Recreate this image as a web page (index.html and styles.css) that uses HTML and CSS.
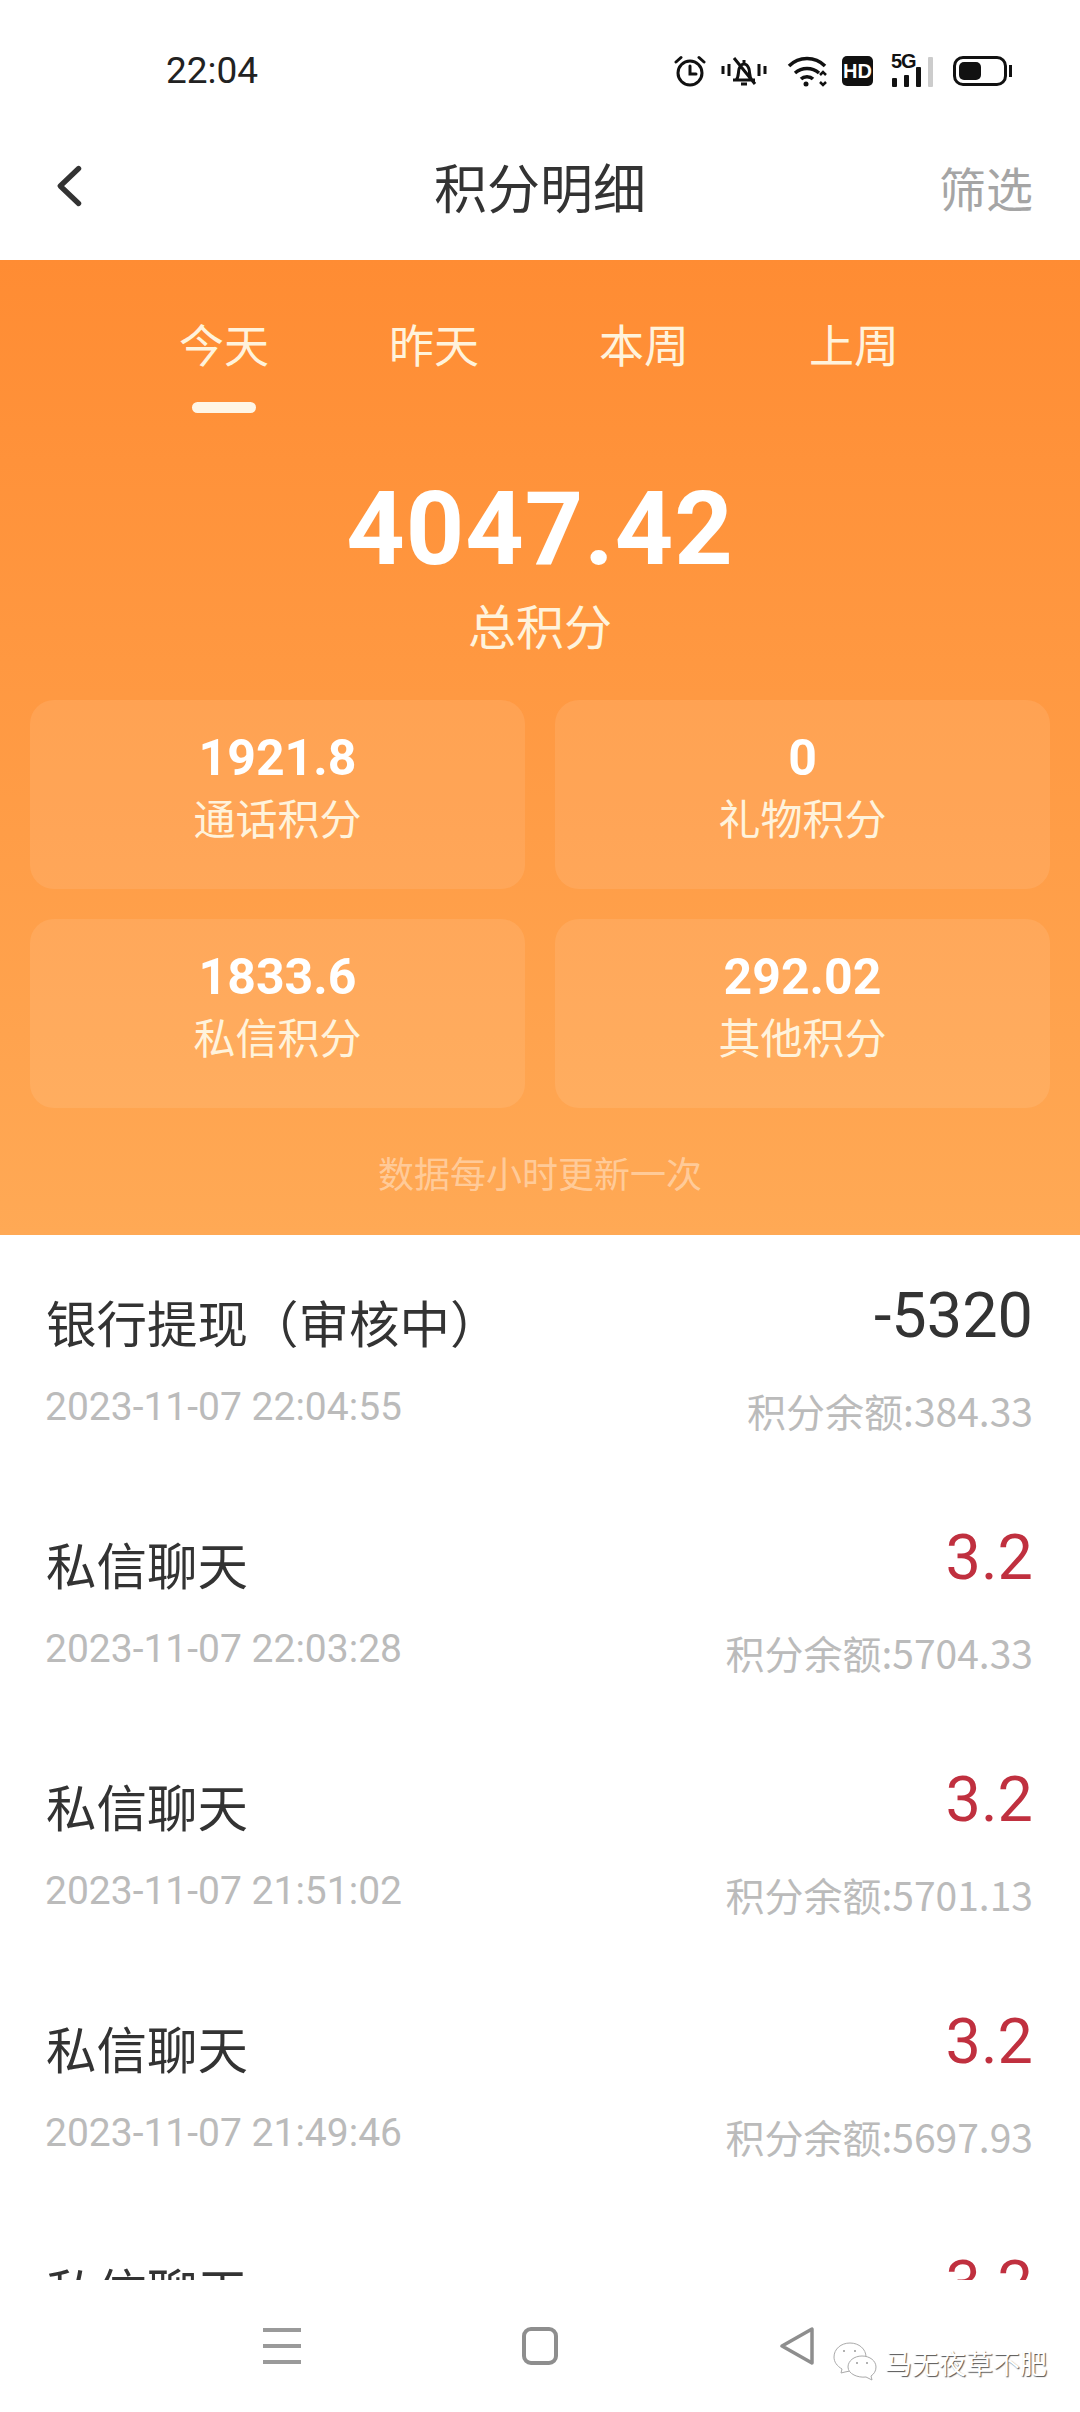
FILE: index.html
```html
<!DOCTYPE HTML>
<html lang="zh-CN">

<head>
    <meta charset="utf-8">
    <meta name="viewport" content="width=device-width, initial-scale=1">
    <title>积分明细</title>
    <link rel="stylesheet" href="styles.css">
</head>

<body>
    <div class="phone">
        <div class="status-bar">
            <span class="clock">22:04</span>
            <div class="status-icons">
                <svg class="ic-alarm" viewBox="0 0 32 32" width="32" height="32" fill="none" stroke="#111" stroke-width="3">
                    <circle cx="16" cy="18" r="12"/>
                    <path d="M16 11v8h6M2 7l5-4.500M30 7l-5-4.500" stroke-linecap="round"/>
                </svg>
                <svg class="ic-bell" viewBox="0 0 46 32" width="46" height="32" fill="none" stroke="#111" stroke-width="3">
                    <path d="M2 11v8M8 9v12M38 9v12M44 11v8"/>
                    <path d="M12 25h22M15 25c3-3 2-7 3-11 1-3 3-5 5-5s4 2 5 5c1 4 0 8 3 11M23 9V5M20 29h6M13 3l21 26"/>
                </svg>
                <svg class="ic-wifi" viewBox="0 0 42 32" width="42" height="32" fill="none" stroke="#111" stroke-width="3.500">
                    <path d="M2 11c10-10 26-10 36 0M8 18c7-6 17-6 24 0M14 24c3-3 9-3 12 0"/>
                    <circle cx="19" cy="29" r="2.500" fill="#111" stroke="none"/>
                    <path d="M33 20l3-3 3 3M33 27l3 3 3-3" stroke-width="2.500"/>
                </svg>
                <span class="ic-hd">HD</span>
                <div class="ic-signal">
                    <span class="five-g">5G</span>
                    <i class="bar bar-1"></i>
                    <i class="bar bar-2"></i>
                    <i class="bar bar-3"></i>
                    <i class="bar bar-4"></i>
                </div>
                <div class="ic-battery">
                    <div class="battery-body"><div class="battery-level"></div></div>
                    <div class="battery-tip"></div>
                </div>
            </div>
        </div>

        <div class="header">
            <svg class="back" viewBox="0 0 32 48" width="28" height="44" fill="none" stroke="#333" stroke-width="6" stroke-linecap="round" stroke-linejoin="round">
                <path d="M27 4L6 24l21 20"/>
            </svg>
            <h1 class="title">积分明细</h1>
            <span class="filter">筛选</span>
        </div>

        <div class="summary">
            <div class="tabs">
                <div class="tab active">今天</div>
                <div class="tab">昨天</div>
                <div class="tab">本周</div>
                <div class="tab">上周</div>
            </div>
            <div class="total">4047.42</div>
            <div class="total-label">总积分</div>
            <div class="cards">
                <div class="card"><b>1921.8</b><span>通话积分</span></div>
                <div class="card"><b>0</b><span>礼物积分</span></div>
                <div class="card"><b>1833.6</b><span>私信积分</span></div>
                <div class="card"><b>292.02</b><span>其他积分</span></div>
            </div>
            <div class="note">数据每小时更新一次</div>
        </div>

        <div class="list">
            <div class="row">
                <div class="row-left">
                    <div class="row-title">银行提现（审核中）</div>
                    <div class="row-date">2023-11-07 22:04:55</div>
                </div>
                <div class="row-right">
                    <div class="amount minus">-5320</div>
                    <div class="balance">积分余额:384.33</div>
                </div>
            </div>
            <div class="row">
                <div class="row-left">
                    <div class="row-title">私信聊天</div>
                    <div class="row-date">2023-11-07 22:03:28</div>
                </div>
                <div class="row-right">
                    <div class="amount">3.2</div>
                    <div class="balance">积分余额:5704.33</div>
                </div>
            </div>
            <div class="row">
                <div class="row-left">
                    <div class="row-title">私信聊天</div>
                    <div class="row-date">2023-11-07 21:51:02</div>
                </div>
                <div class="row-right">
                    <div class="amount">3.2</div>
                    <div class="balance">积分余额:5701.13</div>
                </div>
            </div>
            <div class="row">
                <div class="row-left">
                    <div class="row-title">私信聊天</div>
                    <div class="row-date">2023-11-07 21:49:46</div>
                </div>
                <div class="row-right">
                    <div class="amount">3.2</div>
                    <div class="balance">积分余额:5697.93</div>
                </div>
            </div>
            <div class="row">
                <div class="row-left">
                    <div class="row-title">私信聊天</div>
                    <div class="row-date">2023-11-07 21:40:12</div>
                </div>
                <div class="row-right">
                    <div class="amount">3.2</div>
                    <div class="balance">积分余额:5694.73</div>
                </div>
            </div>
        </div>

        <div class="nav">
            <svg viewBox="0 0 38 38" width="38" height="38" fill="#9a9a9a">
                <rect y="1" width="38" height="4"/>
                <rect y="17" width="38" height="4"/>
                <rect y="33" width="38" height="4"/>
            </svg>
            <svg viewBox="0 0 36 38" width="36" height="38" fill="none" stroke="#8e8e8e" stroke-width="4">
                <rect x="2" y="2" width="32" height="34" rx="7"/>
            </svg>
            <svg viewBox="0 0 36 38" width="36" height="38" fill="none" stroke="#8e8e8e" stroke-width="3.500" stroke-linejoin="round">
                <path d="M33 2v34L3 19z"/>
            </svg>
        </div>

        <!-- watermark over the nav bar -->
        <div class="watermark">
            <svg viewBox="0 0 44 40" width="44" height="40" fill="#fff" stroke="#aaa" stroke-width="1">
                <path d="M17 1c9 0 16 6 16 14s-7 14-16 14l-5 1-4 1 1-4C4 24 1 20 1 15 1 7 8 1 17 1z"/>
                <path d="M29 14c8 0 14 5 14 11 0 4-2 7-5 9l1 4-6-3c-8 1-18-3-18-10 0-6 6-11 14-11z"/>
                <circle cx="11" cy="9" r="1" fill="#999" stroke="none"/>
                <circle cx="22" cy="9" r="1" fill="#999" stroke="none"/>
                <circle cx="24" cy="21" r="1" fill="#999" stroke="none"/>
                <circle cx="34" cy="21" r="1" fill="#999" stroke="none"/>
            </svg>
            <span>马无夜草不肥</span>
        </div>
    </div>
</body>

</html>
```

FILE: styles.css
```css
* {
    box-sizing: border-box;
}

body {
    margin: 0;
    font-family: "Noto Sans CJK SC", Roboto, sans-serif;
    background-color: #fff;
}

.phone {
    position: relative;
    width: 1080px;
    height: 2412px;
    display: flex;
    flex-direction: column;
    overflow: hidden;
}

/* status bar */
.status-bar {
    height: 130px;
    padding: 50px 68px 0 166px;
    display: flex;
    justify-content: space-between;
    align-items: flex-start;
}

.clock {
    font-family: Roboto, sans-serif;
    font-size: 37px;
    line-height: 42px;
    color: #222;
}

.status-icons {
    display: flex;
    align-items: center;
    height: 42px;
}

.ic-alarm {
    margin-right: 15px;
}

.ic-bell {
    margin-right: 20px;
}

.ic-wifi {
    margin-right: 13px;
}

.ic-hd {
    width: 31px;
    height: 30px;
    margin-right: 18px;
    background-color: #111;
    border-radius: 5px;
    color: #fff;
    font-family: "Liberation Sans", sans-serif;
    font-weight: 700;
    font-size: 20px;
    line-height: 30px;
    text-align: center;
}

.ic-signal {
    position: relative;
    width: 44px;
    height: 32px;
    margin-right: 18px;
}

.five-g {
    position: absolute;
    left: 0;
    top: -4px;
    font-family: "Liberation Sans", sans-serif;
    font-weight: 700;
    font-size: 20px;
    line-height: 20px;
    letter-spacing: -1px;
    color: #111;
}

.bar {
    position: absolute;
    bottom: 0;
    width: 5px;
    background-color: #111;
    border-radius: 1px;
}

.bar-1 { left: 1px; height: 9px; }
.bar-2 { left: 13px; height: 12px; }
.bar-3 { left: 25px; height: 20px; }
.bar-4 { left: 37px; height: 30px; background-color: #ccc; }

.ic-battery {
    display: flex;
    align-items: center;
}

.battery-body {
    width: 54px;
    height: 30px;
    padding: 3px;
    border: 3px solid #111;
    border-radius: 10px;
}

.battery-level {
    width: 22px;
    height: 100%;
    background-color: #111;
    border-radius: 5px;
}

.battery-tip {
    width: 3px;
    height: 12px;
    margin-left: 2px;
    background-color: #111;
}

/* header */
.header {
    height: 130px;
    padding: 0 47px 18px 55px;
    display: flex;
    align-items: center;
    justify-content: space-between;
    position: relative;
}

.title {
    margin: 0;
    position: absolute;
    left: 0;
    right: 0;
    text-align: center;
    font-size: 53px;
    font-weight: 400;
    color: #333;
}

.filter {
    font-size: 47px;
    color: #a5a5a5;
}

/* orange block */
.summary {
    height: 975px;
    padding: 54px 30px 0;
    background: linear-gradient(180deg, #ff8c33 0%, #ffa955 100%);
    color: #fff;
}

.tabs {
    display: flex;
    padding-left: 149px;
    gap: 120px;
}

.tab {
    width: 90px;
    height: 99px;
    position: relative;
    font-size: 45px;
    line-height: 60px;
    text-align: center;
    color: #fff3dc;
}

.tab.active::after {
    content: "";
    position: absolute;
    left: 13px;
    bottom: 0;
    width: 64px;
    height: 11px;
    border-radius: 6px;
    background-color: #fff6e6;
}

.total {
    margin-top: 61px;
    font-family: Roboto, sans-serif;
    font-weight: 700;
    font-size: 102px;
    line-height: 110px;
    text-align: center;
    letter-spacing: 1px;
}

.total-label {
    margin-top: 8px;
    font-size: 48px;
    line-height: 64px;
    text-align: center;
    color: #fff3dc;
}

.cards {
    margin-top: 44px;
    display: grid;
    grid-template-columns: 1fr 1fr;
    column-gap: 30px;
    row-gap: 30px;
}

.card {
    height: 189px;
    padding-top: 30px;
    display: flex;
    flex-direction: column;
    align-items: center;
    border-radius: 24px;
    background-color: rgba(255, 255, 255, 0.09);
}

.card b {
    font-family: Roboto, sans-serif;
    font-weight: 700;
    font-size: 50px;
    line-height: 56px;
}

.card span {
    font-size: 42px;
    line-height: 62px;
    color: #fff3dc;
}

.note {
    margin-top: 37px;
    font-size: 36px;
    line-height: 54px;
    text-align: center;
    color: rgba(255, 255, 255, 0.42);
}

/* records */
.list {
    flex: 1;
    min-height: 0;
    overflow: hidden;
}

.row {
    height: 242px;
    padding: 50px 47px 0 45px;
    display: flex;
    justify-content: space-between;
}

.row-title {
    padding-left: 1px;
    font-size: 50.500px;
    line-height: 72px;
    color: #333;
}

.row-date {
    margin-top: 27px;
    font-family: Roboto, sans-serif;
    font-size: 39px;
    line-height: 46px;
    color: #bbb;
}

.row-right {
    margin-top: -5px;
    text-align: right;
}

.amount {
    font-family: Roboto, sans-serif;
    font-size: 63px;
    line-height: 72px;
    color: #c0303f;
}

.amount.minus {
    color: #333;
}

.balance {
    margin-top: 35px;
    font-size: 39px;
    line-height: 46px;
    color: #bbb;
}

/* bottom nav */
.nav {
    height: 132px;
    padding: 47px 0 0 263px;
    display: flex;
    align-items: flex-start;
    gap: 221px;
    background-color: #fff;
}

.watermark {
    position: absolute;
    left: 833px;
    top: 2342px;
    display: flex;
    align-items: center;
    gap: 8px;
    font-size: 27px;
    color: #fff;
    text-shadow: 1px 1px 1px #555;
}
```
